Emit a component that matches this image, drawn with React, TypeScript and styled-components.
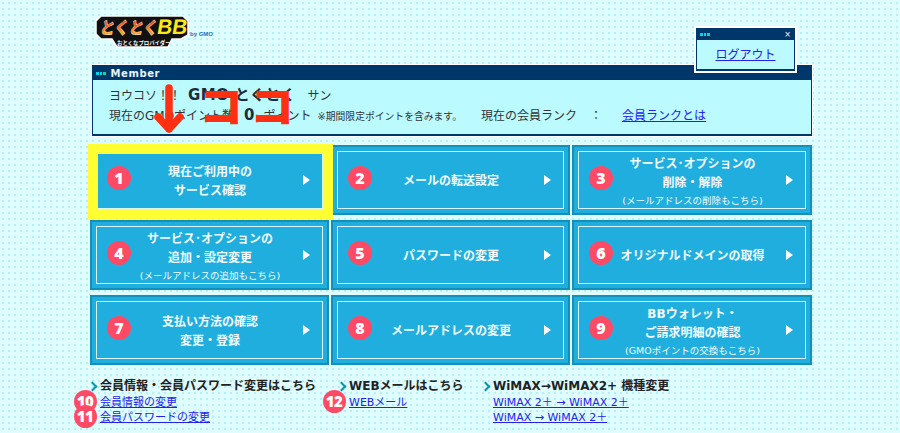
import React from "react";
import styled, { createGlobalStyle } from "styled-components";

const JP = `"DejaVu Sans", "Noto Sans CJK JP", sans-serif`;

const GlobalStyle = createGlobalStyle`
  html, body {
    margin: 0;
    height: 100%;
    overflow: hidden;
  }
  body {
    font-family: ${JP};
    color: #333;
    background-color: #dffcff;
    background-image: radial-gradient(circle at center, #b4f0f8 0, #b4f0f8 1px, transparent 1.4px);
    background-size: 6px 6px;
  }
`;

const Page = styled.div`
  position: relative;
  box-sizing: border-box;
  width: 900px;
  height: 433px;
  padding: 13px 0 0 90px;
`;

const Header = styled.header`
  height: 51px;
  padding-left: 5px;
`;

const Dots = styled.span`
  display: inline-flex;
  gap: 1px;
  i {
    width: 2.5px;
    height: 3px;
    background: #00d8f0;
  }
  i:last-child {
    background: #00e0a0;
  }
`;

const WindowDots = () => (
  <Dots>
    <i />
    <i />
    <i />
  </Dots>
);

const MemberBox = styled.section`
  box-sizing: border-box;
  width: 722px;
  height: 73px;
  margin-left: 1px;
  border: 1px solid #fff;
  background: #00376b;
  padding: 1px;
`;

const MemberTitle = styled.div`
  display: flex;
  align-items: center;
  gap: 5px;
  height: 14px;
  padding-left: 3px;
  color: #e8f4fa;
  font-size: 10px;
  font-weight: bold;
  letter-spacing: 0.6px;
`;

const MemberBody = styled.div`
  box-sizing: border-box;
  height: 54px;
  padding: 6px 0 0 16px;
  background: #bbfbff;
  font-size: 12px;
  line-height: 19px;
`;

const MemberRow = styled.div`
  display: flex;
  align-items: baseline;
  white-space: nowrap;
`;

const UserName = styled.strong`
  margin: 0 12px 0 7px;
  font-size: 15px;
  letter-spacing: 0.4px;
  color: #1e2b3a;
`;

const PointValue = styled.strong`
  margin: 0 9px 0 10px;
  font-size: 15px;
  color: #1e2b3a;
`;

const SmallNote = styled.span`
  margin: 0 19px 0 6px;
  font-size: 9.8px;
`;

const Colon = styled.span`
  margin: 0 20px 0 13px;
`;

const Link = styled.a`
  color: #2222ee;
  text-decoration: underline;
`;

const LogoutWindow = styled.aside`
  position: absolute;
  top: 26px;
  left: 694px;
  box-sizing: border-box;
  width: 103px;
  height: 47px;
  border: 2px solid #fff;
  background: #00376b;
  padding: 1px;
`;

const LogoutTitle = styled.div`
  display: flex;
  align-items: center;
  justify-content: space-between;
  height: 10px;
  padding: 0 3px 1px 3px;
  color: #fff;
  font-size: 8px;
`;

const LogoutBody = styled.div`
  height: 29px;
  background: #bbfbff;
  text-align: center;
  font-size: 12px;
  line-height: 30px;
`;

const Grid = styled.nav`
  display: grid;
  grid-template-columns: 239px 239px 240px;
  grid-auto-rows: 70px;
  column-gap: 2px;
  row-gap: 5px;
  margin-top: 8px;
`;

const MenuButton = styled.a<{ $marked?: boolean }>`
  position: relative;
  display: flex;
  align-items: center;
  box-sizing: border-box;
  border: 2px solid #1390ba;
  background: #20aedf;
  color: #f2fcff;
  text-decoration: none;

  &::before {
    content: "";
    position: absolute;
    inset: 4px;
    border: 1px solid #d8f6ff;
  }

  ${(p) =>
    p.$marked &&
    `
    &::after {
      content: "";
      position: absolute;
      inset: -3px -6px -6px -4px;
      border: 10px solid #ffff33;
      z-index: 2;
    }
  `}
`;

const Badge = styled.span`
  flex: none;
  display: flex;
  align-items: center;
  justify-content: center;
  width: 24px;
  height: 24px;
  margin: -4px 0 0 15px;
  border-radius: 50%;
  background: #ff4a66;
  color: #fff;
  font-family: "Open Sans", sans-serif;
  font-size: 16px;
  font-weight: 800;
`;

const MenuLabel = styled.span`
  flex: 1;
  padding: 3px 14px 0 0;
  text-align: center;
  font-size: 12px;
  font-weight: 700;
  line-height: 19px;
  white-space: nowrap;
`;

const SubLabel = styled.small`
  display: block;
  font-size: 9.5px;
  font-weight: 400;
  line-height: 15px;
`;

const Arrow = styled.span`
  flex: none;
  width: 0;
  height: 0;
  margin-right: 17px;
  border-style: solid;
  border-width: 5.5px 0 5.5px 7px;
  border-color: transparent transparent transparent #fff;
`;

const Footer = styled.footer`
  display: flex;
  margin: 13px 0 0 10px;
`;

const FooterColumn = styled.div<{ $width: number }>`
  position: relative;
  width: ${(p) => p.$width}px;
  font-size: 11px;
  line-height: 15px;
`;

const FooterTitle = styled.h3`
  position: relative;
  margin: 0;
  color: #222;
  font-size: 12px;
  font-weight: 700;
  line-height: 17px;
  white-space: nowrap;

  &::before {
    content: "";
    position: absolute;
    left: -11px;
    top: 5px;
    width: 5px;
    height: 5px;
    border-top: 2px solid #009ab0;
    border-right: 2px solid #009ab0;
    transform: rotate(45deg);
  }
`;

const FooterLink = styled.div`
  position: relative;
  white-space: nowrap;
  height: 15px;
`;

const FooterBadge = styled.span`
  position: absolute;
  left: -26.5px;
  top: -5px;
  display: flex;
  align-items: center;
  justify-content: center;
  width: 23px;
  height: 23px;
  border-radius: 50%;
  background: #ff4a66;
  color: #fff;
  font-family: "Open Sans", sans-serif;
  font-size: 15px;
  font-weight: 800;
  letter-spacing: -0.5px;
`;

const ArrowMark = styled.svg`
  position: absolute;
  left: 150px;
  top: 84px;
  z-index: 3;
`;

const KokoMark = styled.div`
  position: absolute;
  left: 199px;
  top: 70px;
  z-index: 3;
  color: #ff3011;
  font-family: "Noto Sans CJK JP", sans-serif;
  font-size: 44px;
  font-weight: 900;
  line-height: 68px;
  letter-spacing: 7px;
  white-space: nowrap;
`;

const Logo = () => (
  <svg width="122" height="36" viewBox="0 0 122 36">
    <defs>
      <linearGradient id="toku" x1="0" y1="0" x2="0" y2="1">
        <stop offset="0" stopColor="#e8200a" />
        <stop offset="0.55" stopColor="#f56a10" />
        <stop offset="1" stopColor="#ffe020" />
      </linearGradient>
    </defs>
    <polygon
      points="6,3 88,3 93,8 93,22 86,26 77,26 73,34 22,34 17,26 6,26 1,21 1,8"
      fill="#111"
      stroke="#fff"
      strokeWidth="1.5"
    />
    <g transform="skewX(-10)">
      <text
        x="8"
        y="21"
        fill="url(#toku)"
        stroke="#fff"
        strokeWidth="0.4"
        fontFamily="'Noto Sans CJK JP', sans-serif"
        fontSize="17"
        fontWeight="900"
        textLength="58"
        lengthAdjust="spacingAndGlyphs"
      >
        とくとく
      </text>
      <text x="65" y="21" fill="#ffe81a" fontFamily="'Liberation Sans', sans-serif" fontSize="21" fontWeight="700" textLength="30" lengthAdjust="spacingAndGlyphs">
        BB
      </text>
    </g>
    <text x="22" y="32" fill="#fff" fontFamily="'Noto Sans CJK JP', sans-serif" fontSize="5.4" fontWeight="700">
      おとくなプロバイダー
    </text>
    <text x="95" y="23" fill="#2a6fc0" fontFamily="'Liberation Sans', sans-serif" fontSize="6" fontWeight="700">
      by GMO
    </text>
  </svg>
);

type Item = { label: string[]; sub?: string };

const items: Item[] = [
  { label: ["現在ご利用中の", "サービス確認"] },
  { label: ["メールの転送設定"] },
  { label: ["サービス･オプションの", "削除・解除"], sub: "(メールアドレスの削除もこちら)" },
  { label: ["サービス･オプションの", "追加・設定変更"], sub: "(メールアドレスの追加もこちら)" },
  { label: ["パスワードの変更"] },
  { label: ["オリジナルドメインの取得"] },
  { label: ["支払い方法の確認", "変更・登録"] },
  { label: ["メールアドレスの変更"] },
  { label: ["BBウォレット・", "ご請求明細の確認"], sub: "(GMOポイントの交換もこちら)" },
];

export default function App() {
  return (
    <Page>
      <GlobalStyle />
      <Header>
        <Logo />
      </Header>

      <MemberBox>
        <MemberTitle>
          <WindowDots />
          Member
        </MemberTitle>
        <MemberBody>
          <MemberRow>
            ヨウコソ！！
            <UserName>GMO とくとく</UserName>
            サン
          </MemberRow>
          <MemberRow>
            現在のGMOポイント数
            <PointValue>0</PointValue>
            ポイント
            <SmallNote>※期間限定ポイントを含みます。</SmallNote>
            現在の会員ランク
            <Colon>：</Colon>
            <Link href="#">会員ランクとは</Link>
          </MemberRow>
        </MemberBody>
      </MemberBox>

      <LogoutWindow>
        <LogoutTitle>
          <WindowDots />×
        </LogoutTitle>
        <LogoutBody>
          <Link href="#">ログアウト</Link>
        </LogoutBody>
      </LogoutWindow>

      <Grid>
        {items.map((item, i) => (
          <MenuButton href="#" key={i} $marked={i === 0}>
            <Badge>{i + 1}</Badge>
            <MenuLabel>
              {item.label.map((line) => (
                <div key={line}>{line}</div>
              ))}
              {item.sub && <SubLabel>{item.sub}</SubLabel>}
            </MenuLabel>
            <Arrow />
          </MenuButton>
        ))}
      </Grid>

      <Footer>
        <FooterColumn $width={249}>
          <FooterTitle>会員情報・会員パスワード変更はこちら</FooterTitle>
          <FooterLink>
            <FooterBadge>10</FooterBadge>
            <Link href="#">会員情報の変更</Link>
          </FooterLink>
          <FooterLink>
            <FooterBadge>11</FooterBadge>
            <Link href="#">会員パスワードの変更</Link>
          </FooterLink>
        </FooterColumn>
        <FooterColumn $width={144}>
          <FooterTitle>WEBメールはこちら</FooterTitle>
          <FooterLink>
            <FooterBadge>12</FooterBadge>
            <Link href="#">WEBメール</Link>
          </FooterLink>
        </FooterColumn>
        <FooterColumn $width={220}>
          <FooterTitle>WiMAX→WiMAX2+ 機種変更</FooterTitle>
          <FooterLink>
            <Link href="#">WiMAX 2＋ → WiMAX 2＋</Link>
          </FooterLink>
          <FooterLink>
            <Link href="#">WiMAX → WiMAX 2＋</Link>
          </FooterLink>
        </FooterColumn>
      </Footer>

      <ArrowMark width="40" height="52" viewBox="0 0 40 52">
        <path
          d="M19 4 V45 M8 33 L19 45 L30 33"
          fill="none"
          stroke="#ff3011"
          strokeWidth="7.5"
          strokeLinecap="round"
          strokeLinejoin="round"
        />
      </ArrowMark>
      <KokoMark>ココ</KokoMark>
    </Page>
  );
}
